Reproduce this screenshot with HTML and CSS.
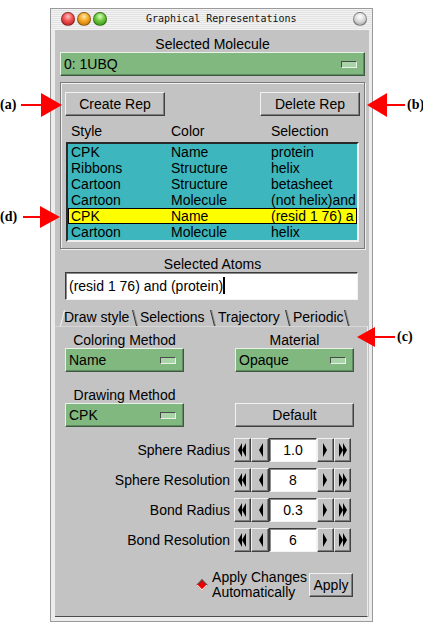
FILE: index.html
```html
<!DOCTYPE html>
<html>
<head>
<meta charset="utf-8">
<title>Graphical Representations</title>
<link rel="stylesheet" href="styles.css">
</head>
<body>
<div class="window">
  <div class="titlebar">
    <span class="light red"></span>
    <span class="light orange"></span>
    <span class="light green"></span>
    <span class="title">Graphical Representations</span>
    <span class="light gray"></span>
  </div>
  <div class="content">
    <div class="label">Selected Molecule</div>
    <div class="menu wide"><span>0: 1UBQ</span><i class="ind"></i></div>

    <div class="group">
      <div class="btnrow">
        <button class="btn rep">Create Rep</button>
        <button class="btn rep">Delete Rep</button>
      </div>
      <div class="cols head"><span>Style</span><span>Color</span><span>Selection</span></div>
      <div class="list">
        <div class="cols row"><span>CPK</span><span>Name</span><span>protein</span></div>
        <div class="cols row"><span>Ribbons</span><span>Structure</span><span>helix</span></div>
        <div class="cols row"><span>Cartoon</span><span>Structure</span><span>betasheet</span></div>
        <div class="cols row"><span>Cartoon</span><span>Molecule</span><span>(not helix)and</span></div>
        <div class="cols row sel"><span>CPK</span><span>Name</span><span>(resid 1 76) a</span></div>
        <div class="cols row"><span>Cartoon</span><span>Molecule</span><span>helix</span></div>
      </div>
    </div>

    <div class="label atoms">Selected Atoms</div>
    <div class="input">(resid 1 76) and (protein)<i class="caret"></i></div>

    <div class="tabs">
      <span class="tab active t1">Draw style</span>
      <span class="tab t2">Selections</span>
      <span class="tab t3">Trajectory</span>
      <span class="tab t4">Periodic</span>
    </div>

    <div class="panel">
      <div class="grid">
        <div class="label">Coloring Method</div>
        <div class="label">Material</div>
        <div class="menu"><span>Name</span><i class="ind"></i></div>
        <div class="menu"><span>Opaque</span><i class="ind"></i></div>
        <div class="label lower">Drawing Method</div>
        <div class="spacer"></div>
        <div class="menu"><span>CPK</span><i class="ind"></i></div>
        <button class="btn def">Default</button>
      </div>

      <div class="spins">
        <div class="spin">
          <span class="slabel">Sphere Radius</span>
          <span class="sb w17"><svg width="9" height="14" viewBox="0 0 9 14"><polygon points="4,0 0,7 4,14"/><polygon points="8,0 4,7 8,14"/></svg></span>
          <span class="sb w18"><svg width="5" height="14" viewBox="0 0 5 14"><polygon points="5,0 1,7 5,14"/></svg></span>
          <span class="field">1.0</span>
          <span class="sb w17"><svg width="5" height="14" viewBox="0 0 5 14"><polygon points="0,0 4,7 0,14"/></svg></span>
          <span class="sb w17"><svg width="9" height="14" viewBox="0 0 9 14"><polygon points="1,0 5,7 1,14"/><polygon points="5,0 9,7 5,14"/></svg></span>
        </div>
        <div class="spin">
          <span class="slabel">Sphere Resolution</span>
          <span class="sb w17"><svg width="9" height="14" viewBox="0 0 9 14"><polygon points="4,0 0,7 4,14"/><polygon points="8,0 4,7 8,14"/></svg></span>
          <span class="sb w18"><svg width="5" height="14" viewBox="0 0 5 14"><polygon points="5,0 1,7 5,14"/></svg></span>
          <span class="field">8</span>
          <span class="sb w17"><svg width="5" height="14" viewBox="0 0 5 14"><polygon points="0,0 4,7 0,14"/></svg></span>
          <span class="sb w17"><svg width="9" height="14" viewBox="0 0 9 14"><polygon points="1,0 5,7 1,14"/><polygon points="5,0 9,7 5,14"/></svg></span>
        </div>
        <div class="spin">
          <span class="slabel">Bond Radius</span>
          <span class="sb w17"><svg width="9" height="14" viewBox="0 0 9 14"><polygon points="4,0 0,7 4,14"/><polygon points="8,0 4,7 8,14"/></svg></span>
          <span class="sb w18"><svg width="5" height="14" viewBox="0 0 5 14"><polygon points="5,0 1,7 5,14"/></svg></span>
          <span class="field">0.3</span>
          <span class="sb w17"><svg width="5" height="14" viewBox="0 0 5 14"><polygon points="0,0 4,7 0,14"/></svg></span>
          <span class="sb w17"><svg width="9" height="14" viewBox="0 0 9 14"><polygon points="1,0 5,7 1,14"/><polygon points="5,0 9,7 5,14"/></svg></span>
        </div>
        <div class="spin">
          <span class="slabel">Bond Resolution</span>
          <span class="sb w17"><svg width="9" height="14" viewBox="0 0 9 14"><polygon points="4,0 0,7 4,14"/><polygon points="8,0 4,7 8,14"/></svg></span>
          <span class="sb w18"><svg width="5" height="14" viewBox="0 0 5 14"><polygon points="5,0 1,7 5,14"/></svg></span>
          <span class="field">6</span>
          <span class="sb w17"><svg width="5" height="14" viewBox="0 0 5 14"><polygon points="0,0 4,7 0,14"/></svg></span>
          <span class="sb w17"><svg width="9" height="14" viewBox="0 0 9 14"><polygon points="1,0 5,7 1,14"/><polygon points="5,0 9,7 5,14"/></svg></span>
        </div>
      </div>

      <div class="applyrow">
        <i class="diamond"></i>
        <span class="applytext">Apply Changes<br>Automatically</span>
        <button class="btn apply">Apply</button>
      </div>
    </div>
  </div>
</div>

<div class="note na">(a)</div>
<svg class="arrow aa" width="42" height="26" viewBox="0 0 42 26"><line x1="0" y1="13" x2="22" y2="13"/><polygon points="20,1 41,13 20,25"/></svg>
<div class="note nb">(b)</div>
<svg class="arrow ab" width="38" height="26" viewBox="0 0 38 26"><line x1="16" y1="13" x2="38" y2="13"/><polygon points="20,1 0,13 20,25"/></svg>
<div class="note nc">(c)</div>
<svg class="arrow ac" width="38" height="22" viewBox="0 0 38 22"><line x1="14" y1="11" x2="38" y2="11"/><polygon points="18,1 0,11 18,21"/></svg>
<div class="note nd">(d)</div>
<svg class="arrow ad" width="38" height="24" viewBox="0 0 38 24"><line x1="0" y1="12" x2="20" y2="12"/><polygon points="17,1 37,12 17,23"/></svg>
</body>
</html>
```

FILE: styles.css
```css
* { box-sizing: border-box; margin: 0; padding: 0; }
html, body { width: 423px; height: 630px; background: #ffffff; overflow: hidden; }
body {
  position: relative;
  padding: 8px 0 0 50px;
  font-family: "Liberation Sans", Arial, sans-serif;
  font-size: 14px;
  line-height: 16px;
  color: #000;
}
button { font: inherit; color: inherit; }

.window {
  width: 323px;
  background: #ececec;
  border: 1px solid #9a9a9a;
  padding: 0 3px 4px 4px;
}
.titlebar {
  height: 21px;
  display: flex;
  align-items: flex-start;
  padding: 3px 0 0 10px;
  margin: 0 -3px 0 -4px;
  background: repeating-linear-gradient(#f3f3f3 0 1px, #e2e2e2 1px 2px);
}
.light {
  width: 14px;
  height: 14px;
  border-radius: 50%;
  margin-right: 2px;
  border: 1px solid rgba(0,0,0,0.35);
}
.red { background: radial-gradient(circle at 50% 30%, #ffc0c0 0, #f05050 45%, #b01818 100%); }
.orange { background: radial-gradient(circle at 50% 30%, #ffe8b0 0, #f5a623 45%, #b86a00 100%); }
.green { background: radial-gradient(circle at 50% 30%, #d8ffc0 0, #6cc63a 45%, #2e8a10 100%); }
.gray { background: radial-gradient(circle at 50% 30%, #ffffff 0, #d8d8d8 50%, #909090 100%); margin: 0 5px 0 auto; }
.title {
  margin-left: 37px;
  font-family: "DejaVu Sans Mono", "Liberation Mono", monospace;
  font-size: 10px;
  line-height: 14px;
  color: #111;
}

.content {
  height: 587px;
  background: #c3c3c3;
  padding: 0 4px 0 5px;
  display: flex;
  flex-direction: column;
}
.label { text-align: center; height: 16px; }
.content > .label:first-child { margin-top: 6px; }

.menu {
  height: 24px;
  background: #80b880;
  border: 1px solid;
  border-color: #e8f2e8 #3e5a3e #3e5a3e #e8f2e8;
  box-shadow: inset -1px -1px 0 #5f8a5f;
  display: flex;
  align-items: center;
  justify-content: space-between;
  padding: 0 7px 0 3px;
}
.menu.wide { padding-right: 7px; }
.ind {
  display: block;
  width: 16px;
  height: 7px;
  background: #a8d4a8;
  border: 1px solid;
  border-color: #4a4a4a #e8f2e8 #e8f2e8 #4a4a4a;
}

.group {
  height: 167px;
  margin-top: 6px;
  border: 1px solid #7a7a7a;
  box-shadow: inset 1px 1px 0 #efefef, 1px 1px 0 #efefef;
  padding: 9px 4px 0 4px;
}
.btnrow { display: flex; justify-content: space-between; }
.btn {
  height: 24px;
  background: #c3c3c3;
  border: 1px solid;
  border-color: #f2f2f2 #404040 #404040 #f2f2f2;
  box-shadow: inset -1px -1px 0 #7e7e7e;
  text-align: center;
}
.rep { width: 100px; }
.cols { display: flex; white-space: nowrap; }
.cols span { width: 100px; flex: none; }
.cols span:last-child { width: auto; }
.head { margin: 7px 0 3px 6px; height: 16px; }
.list {
  height: 100px;
  margin: 0 1px;
  background: #3db6bd;
  border: 2px solid;
  border-color: #2a2a2a #efefef #efefef #2a2a2a;
  overflow: hidden;
}
.row { height: 16px; padding-left: 3px; overflow: hidden; }
.row.sel {
  background: #ffff00;
  border: 1px solid #000;
  padding-left: 2px;
  line-height: 14px;
}

.label.atoms { margin-top: 7px; }
.input {
  height: 28px;
  margin: 0 7px 0 5px;
  background: #ffffff;
  border: 1px solid;
  border-color: #3a3a3a #f4f4f4 #f4f4f4 #3a3a3a;
  box-shadow: inset 1px 1px 0 #8a8a8a;
  padding: 5px 0 0 3px;
  display: flex;
}
.caret { display: block; width: 2px; height: 17px; background: #000; margin-top: -1px; }

.tabs {
  display: flex;
  height: 18px;
  margin-top: 8px;
  padding-left: 4px;
  line-height: 18px;
}
.tab { position: relative; flex: none; }
.t1 { width: 76px; }
.t2 { width: 78px; }
.t3 { width: 75px; }
.t4 { width: 59px; }
.tab::after {
  content: "";
  position: absolute;
  right: 5px;
  top: 2px;
  width: 1px;
  height: 16px;
  background: #303030;
  transform: skewX(14deg);
  box-shadow: 1px 0 0 #8a8a8a;
}
.t1::before {
  content: "";
  position: absolute;
  left: -2px;
  top: 2px;
  width: 1px;
  height: 16px;
  background: #f4f4f4;
  transform: skewX(-14deg);
}

.panel {
  flex: 1;
  margin: 0 -3px 0 -5px;
  padding: 5px 14px 0 10px;
  border-bottom: 1px solid #4a4a4a;
  border-right: 1px solid #ececec;
  border-top: 1px solid #d6d6d6;
}
.grid {
  display: grid;
  grid-template-columns: 119px 119px;
  column-gap: 51px;
}
.label.lower { margin-top: 15px; }
.def { width: 119px; }

.spins {
  margin-top: 11px;
  display: flex;
  flex-direction: column;
  gap: 6px;
}
.spin {
  display: flex;
  justify-content: flex-end;
  align-items: stretch;
  height: 24px;
  padding-right: 2px;
}
.slabel { align-self: center; margin-right: 4px; }
.sb {
  display: flex;
  align-items: center;
  justify-content: center;
  background: #c3c3c3;
  border: 1px solid;
  border-color: #f2f2f2 #404040 #404040 #f2f2f2;
  box-shadow: inset -1px -1px 0 #7e7e7e;
}
.sb svg { fill: #000; display: block; }
.w17 { width: 17px; }
.w18 { width: 18px; }
.field {
  width: 48px;
  background: #ffffff;
  border: 1px solid;
  border-color: #3a3a3a #f4f4f4 #f4f4f4 #3a3a3a;
  box-shadow: inset 1px 1px 0 #8a8a8a;
  text-align: center;
  line-height: 22px;
}

.applyrow {
  margin-top: 17px;
  height: 32px;
  display: flex;
  justify-content: flex-end;
  align-items: center;
}
.diamond {
  display: block;
  width: 8px;
  height: 8px;
  background: #ee0000;
  border: 1px solid;
  border-color: #505050 #f4f4f4 #f4f4f4 #505050;
  transform: rotate(45deg);
  margin-right: 6px;
}
.applytext { line-height: 15px; margin-right: 2px; }
.apply { width: 44px; }

.note {
  position: absolute;
  font-family: "Liberation Serif", "Times New Roman", serif;
  font-weight: bold;
  font-size: 14px;
  line-height: 16px;
}
.na { left: 0; top: 97px; }
.nb { left: 407px; top: 97px; }
.nc { left: 397px; top: 329px; }
.nd { left: 0; top: 209px; }
.arrow { position: absolute; }
.arrow line { stroke: #ff0000; stroke-width: 2; }
.arrow polygon { fill: #ff0000; }
.aa { left: 21px; top: 92px; }
.ab { left: 367px; top: 92px; }
.ac { left: 357px; top: 326px; }
.ad { left: 23px; top: 205px; }
```
